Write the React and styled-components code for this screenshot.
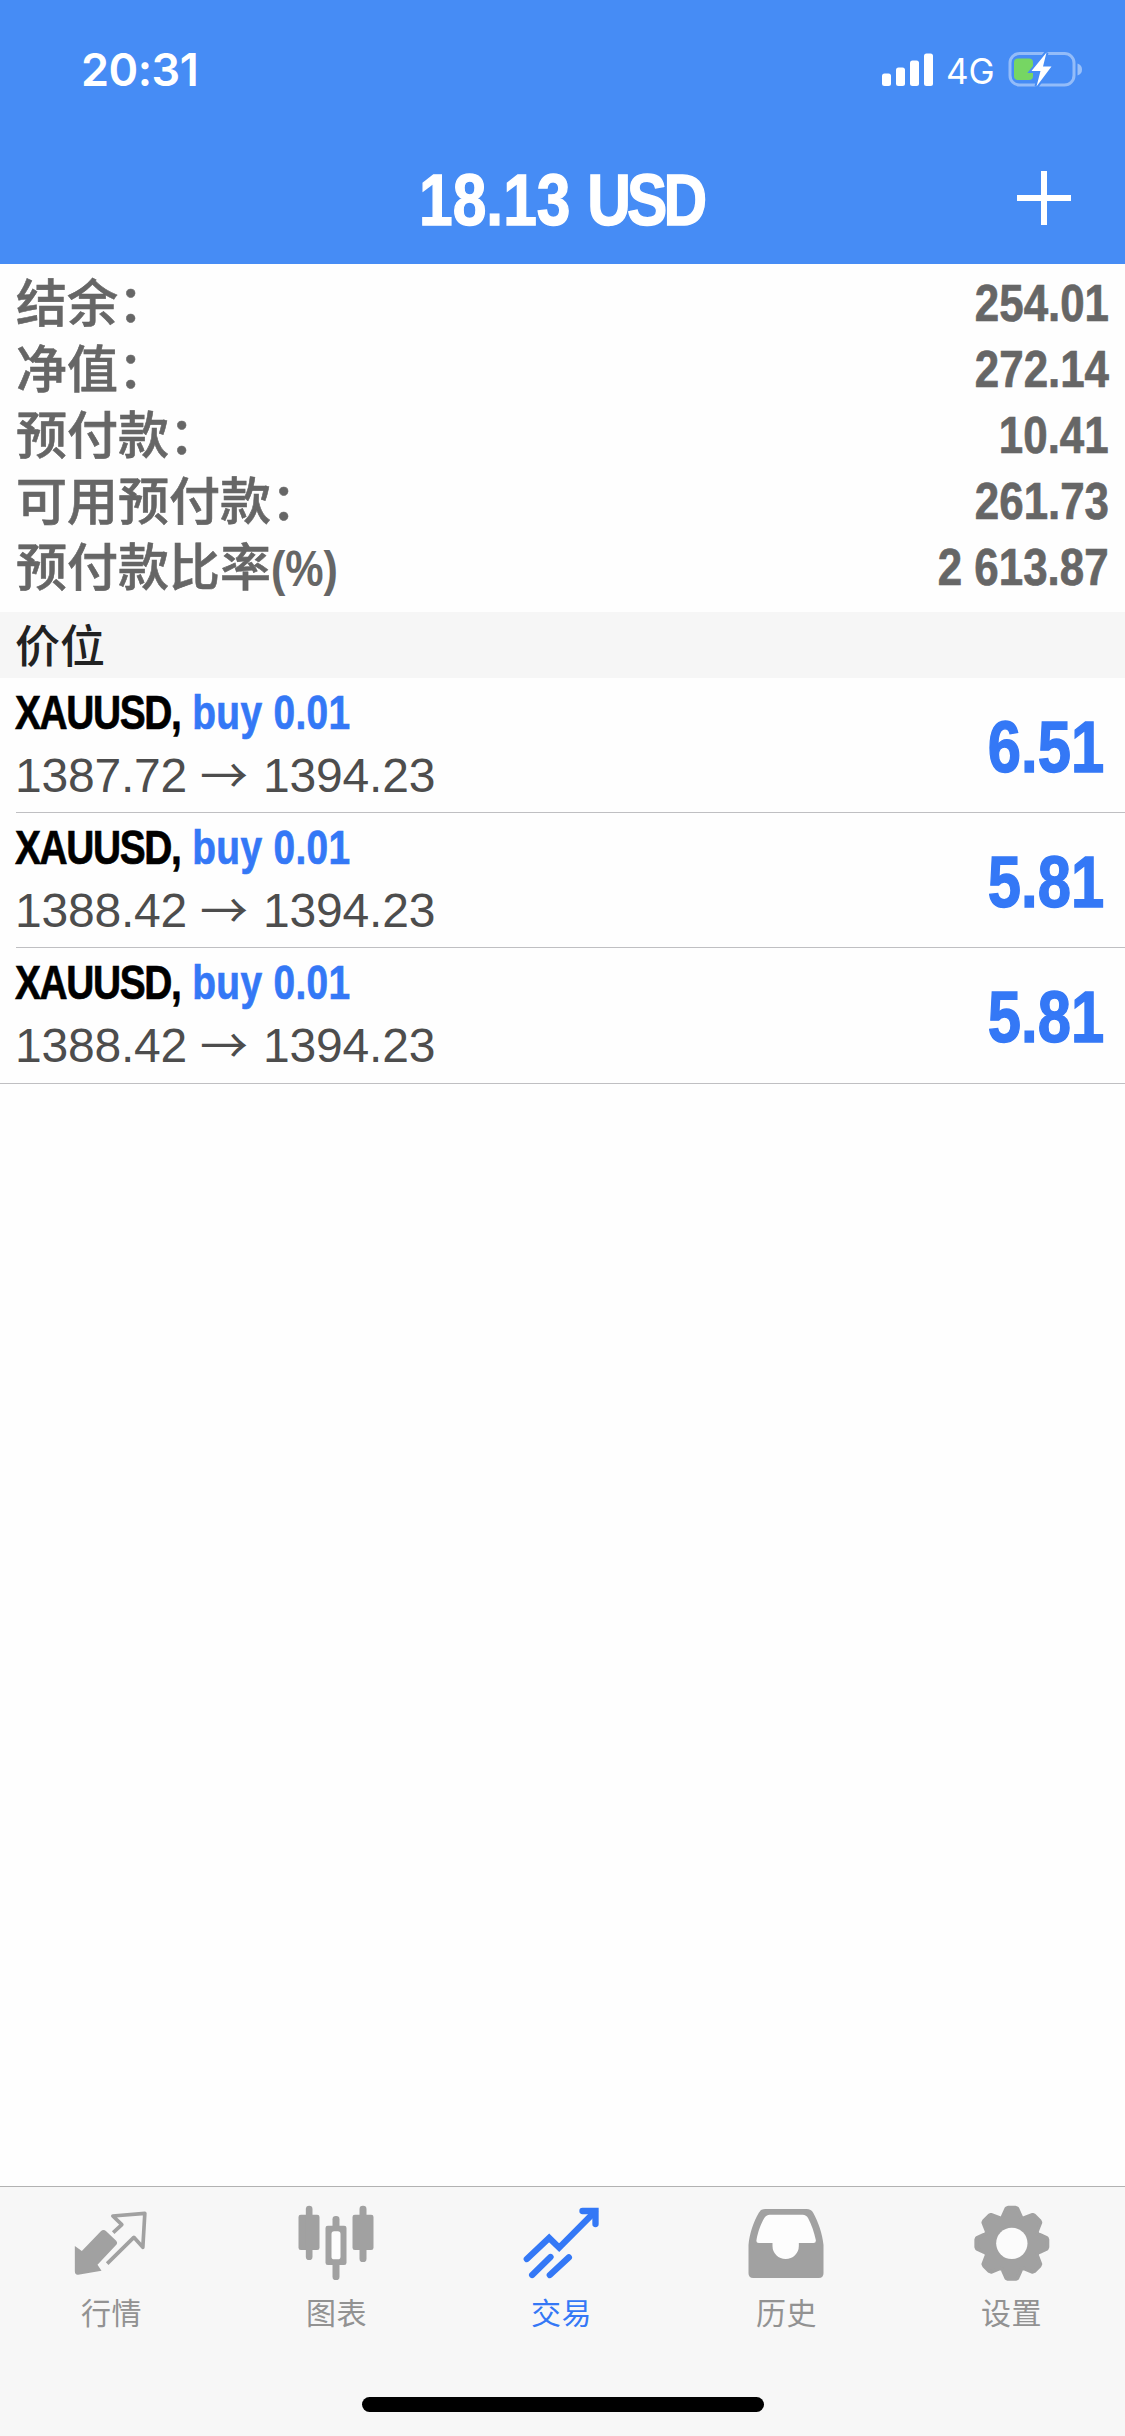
import React from "react";
import styled, { createGlobalStyle } from "styled-components";

const BLUE = "#3478f6";
const LATIN = '"Liberation Sans", "Noto Sans CJK SC", sans-serif';
const SYSTEM = 'Inter, "Noto Sans CJK SC", sans-serif';
const CHINESE = '"Noto Sans CJK SC", sans-serif';

const GlobalStyle = createGlobalStyle`
  *, *::before, *::after { box-sizing: border-box; }
  body { margin: 0; background: #fefefe; }
`;

const Screen = styled.div`
  display: flex;
  flex-direction: column;
  width: 1125px;
  height: 2436px;
  background: #fefefe;
  font-family: ${LATIN};
  overflow: hidden;
`;

const Header = styled.header`
  flex: none;
  height: 264px;
  background: #468cf5;
  color: #fff;
`;

const StatusBar = styled.div`
  display: flex;
  justify-content: space-between;
  height: 132px;
  padding: 45px 43px 0 81px;
  font-family: ${SYSTEM};
`;

const Clock = styled.div`
  height: 49px;
  font-size: 45px;
  line-height: 49px;
  font-weight: 600;
  letter-spacing: -0.5px;
`;

const StatusIcons = styled.div`
  display: flex;
  align-items: center;
  height: 49px;
`;

const Signal = styled.svg`
  width: 51px;
  height: 34px;
`;

const Network = styled.span`
  width: 50px;
  margin: 2px 12px 0 13px;
  font-size: 35px;
  line-height: 40px;
  white-space: nowrap;
`;

const Battery = styled.svg`
  width: 74px;
  height: 36px;
`;

const TitleBar = styled.div`
  display: grid;
  grid-template-columns: 1fr auto 1fr;
  align-items: center;
  height: 132px;
  padding-right: 54px;
  padding-left: 54px;
`;

const Condensed = styled.span`
  display: inline-block;
  font-family: ${LATIN};
  font-weight: 700;
  white-space: nowrap;
  -webkit-text-stroke: ${(p) => p.$heavy || 0.7}px currentColor;
  transform: scaleX(${(p) => p.$scale});
  transform-origin: ${(p) => p.$origin || "left"} center;
`;

const Title = styled.h1`
  grid-column: 2;
  margin: 0;
  padding-top: 3px;
  padding-right: 2px;
  font-size: 72px;
  line-height: 80px;
`;

const Tight = styled.span`
  letter-spacing: ${(p) => p.$by}px;
`;

const AddButton = styled.button`
  grid-column: 3;
  justify-self: end;
  width: 54px;
  height: 54px;
  padding: 0;
  border: 0;
  background: none;
  svg { display: block; }
`;

const Summary = styled.dl`
  flex: none;
  margin: 0;
  padding: 6px 16px 12px;
  color: #666;
`;

const SummaryRow = styled.div`
  display: flex;
  align-items: flex-start;
  justify-content: space-between;
  height: 66px;
`;

const SummaryLabel = styled.dt`
  display: flex;
  height: 66px;
  font-family: ${CHINESE};
  font-size: 51px;
  line-height: 61px;
  font-weight: 500;
  -webkit-text-stroke: 0.6px currentColor;
`;

const Percent = styled.span`
  font-size: 50px;
  line-height: 61px;
`;

const SummaryValue = styled.dd`
  margin: 0;
  font-size: 51px;
  line-height: 68px;
`;

const SectionTitle = styled.h2`
  flex: none;
  height: 66px;
  margin: 0;
  padding-left: 15px;
  background: #f6f6f6;
  color: #222;
  font-family: ${CHINESE};
  font-size: 45px;
  line-height: 63px;
  font-weight: 500;
`;

const Positions = styled.ul`
  flex: 1;
  margin: 0;
  padding: 0;
  list-style: none;
`;

const Position = styled.li`
  display: flex;
  align-items: flex-start;
  justify-content: space-between;
  height: ${(p) => (p.$last ? 136 : 135)}px;
  margin-left: ${(p) => (p.$last ? 0 : 16)}px;
  padding-left: ${(p) => (p.$last ? 16 : 0)}px;
  padding-right: 21px;
  border-bottom: 1px solid #bfbfc2;
`;

const PositionText = styled.div`
  display: flex;
  flex-direction: column;
  height: 134px;
  margin-left: -1px;
  padding-top: 7px;
`;

const Order = styled.div`
  height: 58px;
  font-size: 48px;
  line-height: 56px;
  color: #000;
`;

const Side = styled.span`
  margin-left: 1px;
  color: ${BLUE};
  letter-spacing: 0.4px;
`;

const Prices = styled.div`
  display: flex;
  gap: 13px;
  height: 66px;
  font-size: 48px;
  line-height: 66px;
  letter-spacing: -0.2px;
  color: #4d4d4d;
`;

const Arrow = styled.span`
  width: 50px;
  font-family: ${CHINESE};
  line-height: 58px;
`;

const Profit = styled.div`
  font-size: 72px;
  line-height: 138px;
  height: 134px;
  color: ${BLUE};
`;

const TabBar = styled.nav`
  flex: none;
  display: flex;
  flex-direction: column;
  align-items: center;
  height: 250px;
  border-top: 1px solid #b2b2b2;
  background: #f7f7f7;
`;

const Tabs = styled.div`
  display: grid;
  grid-template-columns: repeat(5, 225px);
  width: 100%;
  height: 210px;
  margin-left: -2px;
`;

const Tab = styled.a`
  display: flex;
  flex-direction: column;
  align-items: center;
  padding-top: 15px;
  color: ${(p) => (p.$active ? BLUE : "#929292")};
  font-family: ${CHINESE};
  font-size: 30px;
  line-height: 40px;
  letter-spacing: 0.4px;
`;

const TabIcon = styled.svg`
  width: 90px;
  height: 80px;
  margin-bottom: 9px;
  color: ${(p) => (p.$active ? BLUE : "#a1a1a1")};
`;

const HomeIndicator = styled.div`
  width: 402px;
  height: 15px;
  border-radius: 8px;
  background: #000;
`;

const gearPath = (() => {
  const pts = [];
  for (let i = 0; i < 8; i += 1) {
    [[-20, 83], [-16.5, 89], [-9, 106], [-6, 107.500], [6, 107.500], [9, 106], [16.5, 89], [20, 83]].forEach(([a, r]) => {
      const t = ((i * 45 + a) * Math.PI) / 180;
      pts.push(`${(134.5 + r * Math.sin(t)).toFixed(1)} ${(124 - r * Math.cos(t)).toFixed(1)}`);
    });
  }
  return `M${pts.join("L")}Z`;
})();

const TABS = [
  {
    label: "行情",
    box: "202.5 96 270 240",
    icon: (
      <>
        <path
          d="M226 228L247 243L304 184Q312 176 320 184L350 212Q356 219 349 226L294 284L306 302L236 314Q226 315 226 304Z"
          fill="currentColor"
        />
        <path
          d="M341 188L367 164L340 138L436 130L430 232L403 202L323 281"
          fill="none"
          stroke="currentColor"
          strokeWidth="11"
          strokeLinejoin="round"
        />
      </>
    ),
  },
  {
    label: "图表",
    box: "877.5 96 270 240",
    icon: (
      <g fill="currentColor">
        <rect x="897" y="134" width="63" height="106" rx="7" />
        <rect x="919" y="107" width="20" height="163" rx="10" />
        <rect x="978" y="167" width="63" height="118" rx="7" />
        <rect x="999" y="138" width="21" height="192" rx="10" />
        <rect x="996" y="184" width="27" height="84" rx="8" fill="#fdfdfd" />
        <rect x="1059" y="134" width="63" height="106" rx="7" />
        <rect x="1080" y="107" width="21" height="169" rx="10" />
      </g>
    ),
  },
  {
    label: "交易",
    active: true,
    box: "352.5 96 270 240",
    icon: (
      <g fill="none" stroke="currentColor" strokeWidth="19" strokeLinecap="round">
        <path d="M382 267L449 204L479 233L586 125" />
        <path d="M549 123H588V162" />
        <path d="M398 315L453 261" />
        <path d="M451 315L508 262" />
      </g>
    ),
  },
  {
    label: "历史",
    box: "127.5 96 270 240",
    icon: (
      <>
        <path
          d="M147 225C150 190 162 156 178 128Q184 117 197 117H321Q335 117 341 128C356 156 369 190 372 225V310Q372 324 358 324H161Q147 324 147 310Z"
          fill="currentColor"
        />
        <path
          d="M171 210C175 187 184 162 194 145Q200 134 211 134H309Q321 134 326 145C336 164 344 187 349 210Q350 219 342 219H298V228A39.500 39 0 0 1 219 228V219H178Q169 219 171 210Z"
          fill="#fdfdfd"
        />
      </>
    ),
  },
  {
    label: "设置",
    box: "0 0 270 240",
    icon: (
      <>
        <path d={gearPath} fill="currentColor" stroke="currentColor" strokeWidth="11" strokeLinejoin="round" />
        <circle cx="134.5" cy="124" r="47" fill="#fbfbfb" />
      </>
    ),
  },
];

const SUMMARY = [
  { label: "结余：", value: "254.01" },
  { label: "净值：", value: "272.14" },
  { label: "预付款：", value: "10.41" },
  { label: "可用预付款：", value: "261.73" },
  { label: "预付款比率", percent: true, value: "2 613.87" },
];

const POSITIONS = [
  { symbol: "XAUUSD", side: "buy 0.01", open: "1387.72", now: "1394.23", profit: "6.51" },
  { symbol: "XAUUSD", side: "buy 0.01", open: "1388.42", now: "1394.23", profit: "5.81" },
  { symbol: "XAUUSD", side: "buy 0.01", open: "1388.42", now: "1394.23", profit: "5.81" },
];

export default function App() {
  return (
    <Screen>
      <GlobalStyle />
      <Header>
        <StatusBar>
          <Clock>20:31</Clock>
          <StatusIcons>
            <Signal viewBox="0 0 51 34" fill="#fff">
              <rect x="0" y="20.500" width="9" height="12.500" rx="2.500" />
              <rect x="14" y="14.500" width="9" height="18.500" rx="2.500" />
              <rect x="28" y="7.500" width="9" height="25.500" rx="2.500" />
              <rect x="42" y="0.500" width="9" height="32.500" rx="2.500" />
            </Signal>
            <Network>4G</Network>
            <Battery viewBox="0 0 74 36">
              <rect x="2" y="1.500" width="64" height="31.500" rx="9.500" fill="none" stroke="#fff" strokeOpacity="0.42" strokeWidth="3" />
              <path d="M69.500 11.500Q74 13 74 17.500T69.500 23.500Z" fill="#fff" fillOpacity="0.45" />
              <rect x="6" y="6.500" width="19" height="21.500" rx="4" fill="#76d663" />
              <path d="M38.500 0.500L23.500 19H32.500L28.500 34.500L43.500 14.500H35Z" fill="#fff" stroke="#468cf5" strokeWidth="4" paintOrder="stroke" />
            </Battery>
          </StatusIcons>
        </StatusBar>
        <TitleBar>
          <Title>
            <Condensed $scale={0.84} $origin="center" $heavy={1.4}>
              18.13 <Tight $by={-4.6}>USD</Tight>
            </Condensed>
          </Title>
          <AddButton aria-label="+">
            <svg width="54" height="54" viewBox="0 0 54 54" fill="#fff">
              <rect x="24" width="6" height="54" />
              <rect y="24" width="54" height="6" />
            </svg>
          </AddButton>
        </TitleBar>
      </Header>

      <Summary>
        {SUMMARY.map((row) => (
          <SummaryRow key={row.label}>
            <SummaryLabel>
              <span>{row.label}</span>
              {row.percent && (
                <Percent>
                  <Condensed $scale={0.86} $heavy={0.1}>(%)</Condensed>
                </Percent>
              )}
            </SummaryLabel>
            <SummaryValue>
              <Condensed $scale={0.86} $origin="right">{row.value}</Condensed>
            </SummaryValue>
          </SummaryRow>
        ))}
      </Summary>

      <SectionTitle>价位</SectionTitle>

      <Positions>
        {POSITIONS.map((p, i) => (
          <Position key={i} $last={i === POSITIONS.length - 1}>
            <PositionText>
              <Order>
                <Condensed $scale={0.81}>
                  <Tight $by={-1.7}>{p.symbol},</Tight>
                  <Side> {p.side}</Side>
                </Condensed>
              </Order>
              <Prices>
                <span>{p.open}</span>
                <Arrow>→</Arrow>
                <span>{p.now}</span>
              </Prices>
            </PositionText>
            <Profit>
              <Condensed $scale={0.83} $origin="right" $heavy={1.4}>{p.profit}</Condensed>
            </Profit>
          </Position>
        ))}
      </Positions>

      <TabBar>
        <Tabs>
          {TABS.map((tab) => (
            <Tab key={tab.label} $active={tab.active}>
              <TabIcon viewBox={tab.box} $active={tab.active}>{tab.icon}</TabIcon>
              {tab.label}
            </Tab>
          ))}
        </Tabs>
        <HomeIndicator />
      </TabBar>
    </Screen>
  );
}
